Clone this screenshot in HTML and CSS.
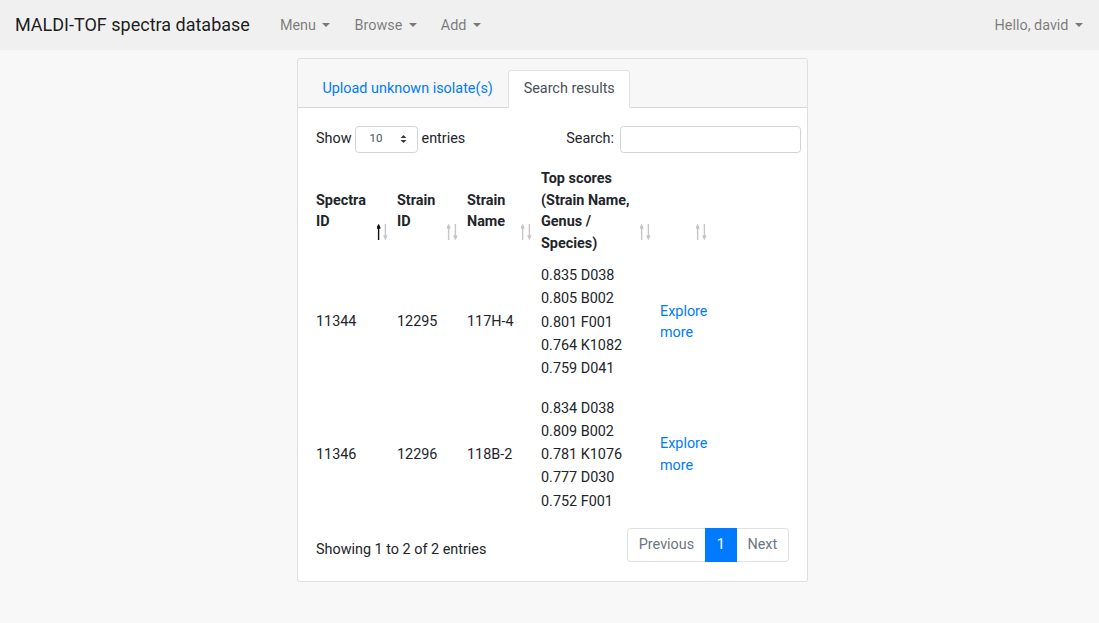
FILE: index.html
```html
<!DOCTYPE html>
<html>
<head>
<meta charset="utf-8">
<link rel="stylesheet" href="styles.css">
</head>
<body>
<nav class="navbar">
  <span class="brand">MALDI-TOF spectra database</span>
  <ul class="nav">
    <li class="nav-link caret">Menu</li>
    <li class="nav-link caret">Browse</li>
    <li class="nav-link caret">Add</li>
  </ul>
  <ul class="nav nav-right">
    <li class="nav-link caret">Hello, david</li>
  </ul>
</nav>
<main class="main">
  <div class="card">
    <div class="card-header">
      <ul class="tabs">
        <li class="tab">Upload unknown isolate(s)</li>
        <li class="tab active">Search results</li>
      </ul>
    </div>
    <div class="card-body">
      <div class="dt-top">
        <label class="length">Show <span class="select">10<svg class="updown" width="7" height="10" viewBox="0 0 7 10"><path d="M0.5 4 L3.5 1 L6.5 4 Z M0.5 6 L3.5 9 L6.5 6 Z" fill="#343a40"/></svg></span> entries</label>
        <label class="search">Search: <span class="input"></span></label>
      </div>
      <table class="dt">
        <colgroup>
          <col class="c1"><col class="c2"><col class="c3"><col class="c4"><col class="c5">
        </colgroup>
        <thead>
          <tr>
            <th>Spectra ID<svg class="sorter asc" width="12" height="16" viewBox="0 0 12 16"><g class="up"><path d="M1.6 3 V16" stroke-width="1.4"/><path d="M0 4.2 L1.6 0.5 L3.2 4.2 Z"/></g><g class="down"><path d="M8.4 0 V13" stroke-width="1.4"/><path d="M6.8 11.8 L8.4 15.5 L10 11.8 Z"/></g></svg></th>
            <th>Strain ID<svg class="sorter" width="12" height="16" viewBox="0 0 12 16"><g class="up"><path d="M1.6 3 V16" stroke-width="1.4"/><path d="M0 4.2 L1.6 0.5 L3.2 4.2 Z"/></g><g class="down"><path d="M8.4 0 V13" stroke-width="1.4"/><path d="M6.8 11.8 L8.4 15.5 L10 11.8 Z"/></g></svg></th>
            <th>Strain Name<svg class="sorter" width="12" height="16" viewBox="0 0 12 16"><g class="up"><path d="M1.6 3 V16" stroke-width="1.4"/><path d="M0 4.2 L1.6 0.5 L3.2 4.2 Z"/></g><g class="down"><path d="M8.4 0 V13" stroke-width="1.4"/><path d="M6.8 11.8 L8.4 15.5 L10 11.8 Z"/></g></svg></th>
            <th>Top scores (Strain Name, Genus / Species)<svg class="sorter" width="12" height="16" viewBox="0 0 12 16"><g class="up"><path d="M1.6 3 V16" stroke-width="1.4"/><path d="M0 4.2 L1.6 0.5 L3.2 4.2 Z"/></g><g class="down"><path d="M8.4 0 V13" stroke-width="1.4"/><path d="M6.8 11.8 L8.4 15.5 L10 11.8 Z"/></g></svg></th>
            <th><svg class="sorter" width="12" height="16" viewBox="0 0 12 16"><g class="up"><path d="M1.6 3 V16" stroke-width="1.4"/><path d="M0 4.2 L1.6 0.5 L3.2 4.2 Z"/></g><g class="down"><path d="M8.4 0 V13" stroke-width="1.4"/><path d="M6.8 11.8 L8.4 15.5 L10 11.8 Z"/></g></svg></th>
          </tr>
        </thead>
        <tbody>
          <tr>
            <td>11344</td>
            <td>12295</td>
            <td>117H-4</td>
            <td><div class="sc">0.835 D038</div><div class="sc">0.805 B002</div><div class="sc">0.801 F001</div><div class="sc">0.764 K1082</div><div class="sc">0.759 D041</div></td>
            <td><a class="link">Explore more</a></td>
          </tr>
          <tr>
            <td>11346</td>
            <td>12296</td>
            <td>118B-2</td>
            <td><div class="sc">0.834 D038</div><div class="sc">0.809 B002</div><div class="sc">0.781 K1076</div><div class="sc">0.777 D030</div><div class="sc">0.752 F001</div></td>
            <td><a class="link">Explore more</a></td>
          </tr>
        </tbody>
      </table>
      <div class="dt-bottom">
        <div class="info">Showing 1 to 2 of 2 entries</div>
        <ul class="pagination">
          <li class="page disabled">Previous</li>
          <li class="page current">1</li>
          <li class="page disabled">Next</li>
        </ul>
      </div>
    </div>
  </div>
</main>
</body>
</html>
```
FILE: styles.css
```css
* { box-sizing: border-box; }
html, body { margin: 0; padding: 0; }
body {
  background: #f8f8f8;
  font-family: Roboto, "Liberation Sans", sans-serif;
  font-size: 14.4px;
  line-height: 21.6px;
  color: #212529;
}
ul { list-style: none; margin: 0; padding: 0; }

.navbar {
  display: flex;
  align-items: center;
  height: 50px;
  padding: 0 4px 0 15px;
  background: #f0f0f0;
}
.brand {
  font-size: 18px;
  color: rgba(0,0,0,.9);
  margin-right: 18px;
  line-height: 27px;
  padding-bottom: 2px;
}
.nav { display: flex; }
.nav-right { margin-left: auto; }
.nav-link {
  padding: 8px 12px 6px;
  color: rgba(0,0,0,.5);
}
.caret::after {
  content: "";
  display: inline-block;
  margin-left: 6.5px;
  vertical-align: 3.7px;
  border-top: 4.3px solid;
  border-right: 4.3px solid transparent;
  border-left: 4.3px solid transparent;
  border-bottom: 0;
}

.main { padding: 8px 0 0 297px; }
.card {
  width: 511px;
  background: #fff;
  border: 1px solid rgba(0,0,0,.125);
  border-radius: 3.6px;
}
.card-header {
  background: #f7f7f7;
  border-bottom: 1px solid rgba(0,0,0,.125);
  padding: 10.8px 18px 0 18px;
  border-radius: 3.6px 3.6px 0 0;
}
.tabs { display: flex; margin: 0 0 -1px -9px; }
.tab {
  padding: 7.2px 14.4px;
  border: 1px solid transparent;
  border-radius: 3.6px 3.6px 0 0;
  color: #007bff;
}
.tab.active {
  background: #fff;
  color: #495057;
  border-color: #dee2e6 #dee2e6 #fff;
}
.card-body { padding: 18px 18px 19px; }

.dt-top {
  display: flex;
  justify-content: space-between;
  align-items: center;
  margin-right: -12px;
}
.length { display: flex; align-items: center; }
.select {
  display: inline-flex;
  align-items: center;
  justify-content: space-between;
  width: 63px;
  height: 27px;
  margin: 0 4px 0 3px;
  padding: 0 10px 0 14px;
  border: 1px solid #ced4da;
  border-radius: 3.6px;
  background: #fff;
  font-size: 11.5px;
  color: #495057;
}
.updown { display: block; }
.search { display: flex; align-items: center; }
.input {
  display: inline-block;
  width: 181px;
  height: 27px;
  margin-left: 6px;
  border: 1px solid #ced4da;
  border-radius: 3.6px;
  background: #fff;
}

.dt {
  border-collapse: collapse;
  table-layout: fixed;
  width: 400px;
  margin: 11px 0 0 -4.3px;
}
.c1 { width: 81px; } .c2 { width: 70px; } .c3 { width: 74px; } .c4 { width: 119px; } .c5 { width: 56px; }
th {
  position: relative;
  text-align: left;
  vertical-align: middle;
  font-weight: 700;
  padding: 4.3px 26px 4.3px 4.3px;
}
.sorter {
  position: absolute;
  right: 4px;
  bottom: 19px;
  display: block;
}
.sorter .up, .sorter .down { fill: #c4c6c8; stroke: #c4c6c8; }
.sorter.asc .up { fill: #111; stroke: #111; }
td {
  vertical-align: middle;
  padding: 5.3px 4.3px 11px 4.3px;
}
.sc { line-height: 23.25px; }
.link { color: #007bff; }

.dt-bottom {
  display: flex;
  justify-content: space-between;
  align-items: center;
  margin-top: 4px;
}
.info { padding-top: 10px; }
.pagination { display: flex; }
.page {
  padding: 7.2px 10.8px;
  line-height: 18px;
  border: 1px solid #dee2e6;
  margin-left: -1px;
  color: #6c757d;
  background: #fff;
}
.page:first-child { border-radius: 3.6px 0 0 3.6px; margin-left: 0; }
.page:last-child { border-radius: 0 3.6px 3.6px 0; }
.page.current { background: #007bff; border-color: #007bff; color: #fff; position: relative; }
```
